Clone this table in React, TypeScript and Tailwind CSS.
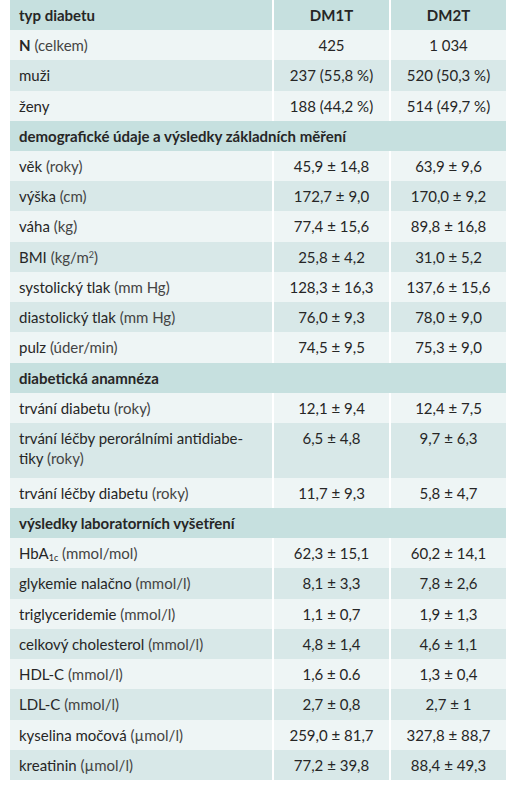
const LIGHT = "bg-[#eef5f5]";
const DARK = "bg-[#d8e8e8]";
const HEAD = "bg-[#c6e0df]";

type Row =
  | { kind: "section"; label: string }
  | { kind: "data"; label: React.ReactNode; a: string; b: string; tall?: boolean };

const U = ({ children }: { children: React.ReactNode }) => <span className="text-[#444]">{children}</span>;

const rows: Row[] = [
  { kind: "data", label: <><b className="font-bold">N</b> <U>(celkem)</U></>, a: "425", b: "1 034" },
  { kind: "data", label: "muži", a: "237 (55,8 %)", b: "520 (50,3 %)" },
  { kind: "data", label: "ženy", a: "188 (44,2 %)", b: "514 (49,7 %)" },
  { kind: "section", label: "demografické údaje a výsledky základních měření" },
  { kind: "data", label: <>věk <U>(roky)</U></>, a: "45,9 ± 14,8", b: "63,9 ± 9,6" },
  { kind: "data", label: <>výška <U>(cm)</U></>, a: "172,7 ± 9,0", b: "170,0 ± 9,2" },
  { kind: "data", label: <>váha <U>(kg)</U></>, a: "77,4 ± 15,6", b: "89,8 ± 16,8" },
  { kind: "data", label: <>BMI <U>(kg/m<sup className="text-[9px]">2</sup>)</U></>, a: "25,8 ± 4,2", b: "31,0 ± 5,2" },
  { kind: "data", label: <>systolický tlak <U>(mm Hg)</U></>, a: "128,3 ± 16,3", b: "137,6 ± 15,6" },
  { kind: "data", label: <>diastolický tlak <U>(mm Hg)</U></>, a: "76,0 ± 9,3", b: "78,0 ± 9,0" },
  { kind: "data", label: <>pulz <U>(úder/min)</U></>, a: "74,5 ± 9,5", b: "75,3 ± 9,0" },
  { kind: "section", label: "diabetická anamnéza" },
  { kind: "data", label: <>trvání diabetu <U>(roky)</U></>, a: "12,1 ± 9,4", b: "12,4 ± 7,5" },
  { kind: "data", label: <>trvání léčby perorálními antidiabe-<br />tiky <U>(roky)</U></>, a: "6,5 ± 4,8", b: "9,7 ± 6,3", tall: true },
  { kind: "data", label: <>trvání léčby diabetu <U>(roky)</U></>, a: "11,7 ± 9,3", b: "5,8 ± 4,7" },
  { kind: "section", label: "výsledky laboratorních vyšetření" },
  { kind: "data", label: <>HbA<sub className="text-[9px]">1c</sub> <U>(mmol/mol)</U></>, a: "62,3 ± 15,1", b: "60,2 ± 14,1" },
  { kind: "data", label: <>glykemie nalačno <U>(mmol/l)</U></>, a: "8,1 ± 3,3", b: "7,8 ± 2,6" },
  { kind: "data", label: <>triglyceridemie <U>(mmol/l)</U></>, a: "1,1 ± 0,7", b: "1,9 ± 1,3" },
  { kind: "data", label: <>celkový cholesterol <U>(mmol/l)</U></>, a: "4,8 ± 1,4", b: "4,6 ± 1,1" },
  { kind: "data", label: <>HDL-C <U>(mmol/l)</U></>, a: "1,6 ± 0.6", b: "1,3 ± 0,4" },
  { kind: "data", label: <>LDL-C <U>(mmol/l)</U></>, a: "2,7 ± 0,8", b: "2,7 ± 1" },
  { kind: "data", label: <>kyselina močová <U>(µmol/l)</U></>, a: "259,0 ± 81,7", b: "327,8 ± 88,7" },
  { kind: "data", label: <>kreatinin <U>(µmol/l)</U></>, a: "77,2 ± 39,8", b: "88,4 ± 49,3" },
];

export default function App() {
  // střídání barev řádků se po každé sekci začíná znovu světlou
  let idx = 0;
  return (
    <div className="w-[520px] h-[800px] bg-white pl-[10px] pr-[14px] text-[#262626] text-[15px] leading-[20px]" style={{ fontFamily: "Lato, 'Open Sans', sans-serif" }}>
      <div className="flex flex-col">
        <div className={`flex h-[30px] ${HEAD} font-bold`}>
          <div className="w-[262px] pl-[9px] flex items-center">typ diabetu</div>
          <div className="w-[117px] border-l-2 border-white flex items-center justify-center">DM1T</div>
          <div className="flex-1 border-l-2 border-white flex items-center justify-center">DM2T</div>
        </div>
        {rows.map((r, i) => {
          if (r.kind === "section") {
            idx = 0;
            return (
              <div key={i} className={`h-[30px] ${HEAD} font-bold pl-[9px] flex items-center`}>
                {r.label}
              </div>
            );
          }
          const bg = idx % 2 === 0 ? LIGHT : DARK;
          idx++;
          return (
            <div key={i} className={`flex ${r.tall ? "h-[55px]" : "h-[30.25px]"} ${bg}`}>
              <div className={`w-[262px] pl-[9px] flex ${r.tall ? "items-start pt-[5px]" : "items-center"}`}>
                <span>{r.label}</span>
              </div>
              <div className={`w-[117px] border-l-2 border-white flex justify-center ${r.tall ? "items-start pt-[5px]" : "items-center"}`}>
                {r.a}
              </div>
              <div className={`flex-1 border-l-2 border-white flex justify-center ${r.tall ? "items-start pt-[5px]" : "items-center"}`}>
                {r.b}
              </div>
            </div>
          );
        })}
      </div>
    </div>
  );
}
